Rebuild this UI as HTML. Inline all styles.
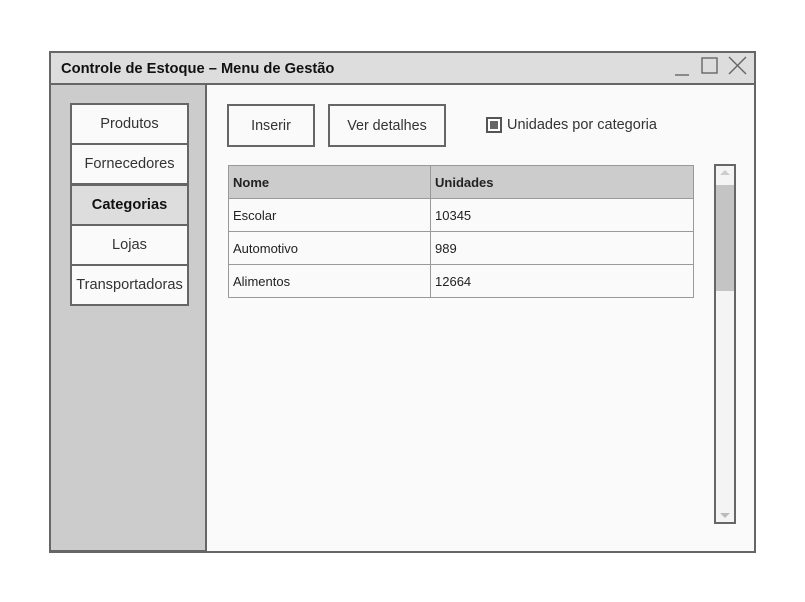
<!DOCTYPE html>
<html><head><style>
*{box-sizing:border-box;margin:0;padding:0}
body{width:805px;height:602px;background:#fff;position:relative;font-family:"Liberation Sans",Arial,sans-serif;color:#222;overflow:hidden}
.a{position:absolute}
.win{left:49px;top:51px;width:707px;height:502px;border:2px solid #666;background:#fafafa}
.title{left:49px;top:51px;width:707px;height:34px;border:2px solid #666;background:#ddd;font-size:14.7px;font-weight:bold;padding:8px 0 0 10px;color:#111}
.side{left:49px;top:83px;width:158px;height:470px;border:2px solid #666;border-bottom-width:3px;background:#ccc}
.nav{left:70px;width:119px;height:42px;border:2px solid #666;background:#fafafa;font-size:14.6px;text-align:center;line-height:38px;color:#333;white-space:nowrap}
.btn{top:104px;height:43px;border:2px solid #666;background:#fafafa;font-size:14.3px;text-align:center;line-height:40px;color:#333}
table{border-collapse:collapse;font-size:13px;color:#222}
td{border:1px solid #999;height:33px;padding:0 0 0 4px}
</style></head><body>
<div class="a win"></div>
<div class="a title">Controle de Estoque – Menu de Gestão</div>
<svg class="a" style="left:670px;top:55px" width="80" height="24"><g stroke="#666" stroke-width="1.4" fill="none"><line x1="5" y1="20" x2="19" y2="20"/><rect x="32" y="3" width="15" height="15"/><line x1="59" y1="2" x2="76" y2="19"/><line x1="76" y1="2" x2="59" y2="19"/></g></svg>
<div class="a side"></div>
<div class="a nav" style="top:103px">Produtos</div>
<div class="a nav" style="top:143px">Fornecedores</div>
<div class="a nav" style="top:184px;background:#ddd;font-weight:bold;color:#111">Categorias</div>
<div class="a nav" style="top:224px">Lojas</div>
<div class="a nav" style="top:264px">Transportadoras</div>
<div class="a btn" style="left:227px;width:88px">Inserir</div>
<div class="a btn" style="left:328px;width:118px">Ver detalhes</div>
<div class="a" style="left:486px;top:117px;width:16px;height:16px;border:2px solid #555;background:#fff"><div style="margin:2px;width:8px;height:8px;background:#666"></div></div>
<div class="a" style="left:507px;top:117px;font-size:14.5px;color:#333">Unidades por categoria</div>
<table class="a" style="left:228px;top:165px;width:466px">
<tr style="background:#ccc;font-weight:bold"><td style="width:202px">Nome</td><td>Unidades</td></tr>
<tr><td>Escolar</td><td>10345</td></tr>
<tr><td>Automotivo</td><td>989</td></tr>
<tr><td>Alimentos</td><td>12664</td></tr>
</table>
<div class="a" style="left:714px;top:164px;width:22px;height:360px;border:2px solid #666;background:#f4f4f4"></div>
<div class="a" style="left:716px;top:185px;width:18px;height:106px;background:#c4c4c4"></div>
<svg class="a" style="left:718px;top:168px" width="14" height="10"><polygon points="2,7 12,7 7,2" fill="#ccc"/></svg>
<svg class="a" style="left:718px;top:511px" width="14" height="10"><polygon points="2,2 12,2 7,7" fill="#bbb"/></svg>
</body></html>
